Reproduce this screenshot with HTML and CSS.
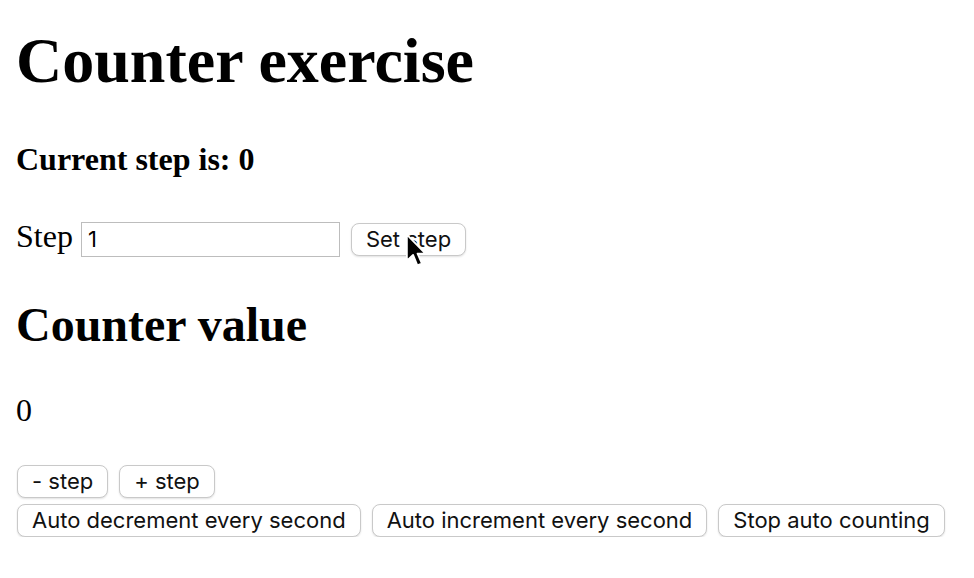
FILE: index.html
```html
<!DOCTYPE html>
<html>
<head>
<meta charset="utf-8">
<title>Counter exercise</title>
<link rel="stylesheet" href="styles.css">
</head>
<body>
<h1 class="title">Counter exercise</h1>
<h4 class="current">Current step is: 0</h4>
<div class="step-row">
  <label class="step-label" for="step">Step</label>
  <input class="step-input" id="step" type="text" value="1">
  <button class="btn">Set step</button>
</div>
<h2 class="subtitle">Counter value</h2>
<p class="value">0</p>
<div class="btn-row">
  <button class="btn">- step</button>
  <button class="btn">+ step</button>
</div>
<div class="btn-row second">
  <button class="btn">Auto decrement every second</button>
  <button class="btn">Auto increment every second</button>
  <button class="btn">Stop auto counting</button>
</div>
<svg class="cursor" width="24" height="36" viewBox="0 0 21 32" aria-hidden="true">
  <path d="M1.5 1.5 L1.5 24.5 L7 19.5 L10.8 28.8 L14.8 27.1 L11 18.3 L18 18.3 Z" fill="#000" stroke="#fff" stroke-width="1.6" stroke-linejoin="round"/>
</svg>
</body>
</html>
```

FILE: styles.css
```css
html, body {
  background: #fff;
}
body {
  margin: 0 16px;
  font-family: "Liberation Serif", "Times New Roman", serif;
  font-size: 32px;
  color: #000;
  position: relative;
}
.title {
  font-size: 64px;
  font-weight: bold;
  margin: 24px 0 42.88px;
}
.current {
  font-size: 32px;
  font-weight: bold;
  margin: 42.56px 0 40.5px;
}
.step-row {
  display: flex;
  align-items: baseline;
}
.step-label {
  margin-right: 8px;
}
.step-input {
  box-sizing: border-box;
  width: 259px;
  height: 35px;
  margin: 0 11px 0 0;
  padding: 0 6px;
  border: 1.5px solid #bdbdbd;
  border-radius: 0;
  font-family: "Inter", "Liberation Sans", sans-serif;
  font-size: 22px;
  color: #000;
  background: #fff;
  outline: none;
}
.subtitle {
  font-size: 48px;
  font-weight: bold;
  margin: 39.84px 0;
}
.value {
  margin: 32px 0 36px;
}
.btn-row {
  display: flex;
  gap: 11px;
  padding-left: 1px;
}
.btn-row.second {
  margin-top: 6px;
}
.btn {
  box-sizing: border-box;
  height: 33px;
  padding: 0 14px;
  margin: 0;
  background: #fff;
  border: 1px solid #c9c9c9;
  border-radius: 8px;
  box-shadow: 0 1px 2px rgba(0, 0, 0, 0.12);
  font-family: "Inter", "Liberation Sans", sans-serif;
  font-size: 22px;
  color: #111;
  line-height: 1;
}
.cursor {
  position: absolute;
  left: 389px;
  top: 233px;
}
```
